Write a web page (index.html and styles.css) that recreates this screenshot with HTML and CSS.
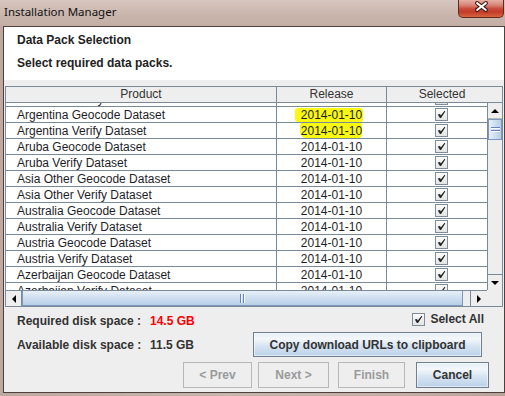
FILE: index.html
```html
<!DOCTYPE html>
<html>
<head>
<meta charset="utf-8">
<title>Installation Manager</title>
<link rel="stylesheet" href="styles.css">
</head>
<body>
<div class="window">
  <div class="titlebar">
    <span class="title">Installation Manager</span>
    <div class="close">
      <svg width="46" height="18" viewBox="0 0 46 18">
        <path d="M19.5 3 L28.5 10 M28.5 3 L19.5 10" stroke="#3b1712" stroke-width="4.2" stroke-linecap="round" fill="none"/>
        <path d="M19.5 3 L28.5 10 M28.5 3 L19.5 10" stroke="#ffffff" stroke-width="2" stroke-linecap="round" fill="none"/>
      </svg>
    </div>
  </div>
  <div class="frame">
    <div class="client">
      <div class="intro">
        <div class="intro-title">Data Pack Selection</div>
        <div class="intro-sub">Select required data packs.</div>
      </div>

      <div class="table">
        <div class="thead">
          <div class="th">Product</div>
          <div class="th">Release</div>
          <div class="th th-last">Selected</div>
        </div>
        <div class="tbody">
          <div class="viewport">
            <div class="rows">
              <div class="row"><div class="td name">Antarctica Verify Dataset</div><div class="td rel">2014-01-10</div><div class="td sel"><span class="cb"><svg width="11" height="11" viewBox="0 0 11 11"><path d="M1.8 5.6 L4 5 L4.8 6.6 L8.6 1.8 L9.3 2.4 L5 9 L3.9 9 Z" fill="#222"/></svg></span></div></div>
              <div class="row"><div class="td name">Argentina Geocode Dataset</div><div class="td rel"><span class="hl hl-a">2014-01-10</span></div><div class="td sel"><span class="cb"><svg width="11" height="11" viewBox="0 0 11 11"><path d="M1.8 5.6 L4 5 L4.8 6.6 L8.6 1.8 L9.3 2.4 L5 9 L3.9 9 Z" fill="#222"/></svg></span></div></div>
              <div class="row"><div class="td name">Argentina Verify Dataset</div><div class="td rel"><span class="hl hl-b">2014-01-10</span></div><div class="td sel"><span class="cb"><svg width="11" height="11" viewBox="0 0 11 11"><path d="M1.8 5.6 L4 5 L4.8 6.6 L8.6 1.8 L9.3 2.4 L5 9 L3.9 9 Z" fill="#222"/></svg></span></div></div>
              <div class="row"><div class="td name">Aruba Geocode Dataset</div><div class="td rel">2014-01-10</div><div class="td sel"><span class="cb"><svg width="11" height="11" viewBox="0 0 11 11"><path d="M1.8 5.6 L4 5 L4.8 6.6 L8.6 1.8 L9.3 2.4 L5 9 L3.9 9 Z" fill="#222"/></svg></span></div></div>
              <div class="row"><div class="td name">Aruba Verify Dataset</div><div class="td rel">2014-01-10</div><div class="td sel"><span class="cb"><svg width="11" height="11" viewBox="0 0 11 11"><path d="M1.8 5.6 L4 5 L4.8 6.6 L8.6 1.8 L9.3 2.4 L5 9 L3.9 9 Z" fill="#222"/></svg></span></div></div>
              <div class="row"><div class="td name">Asia Other Geocode Dataset</div><div class="td rel">2014-01-10</div><div class="td sel"><span class="cb"><svg width="11" height="11" viewBox="0 0 11 11"><path d="M1.8 5.6 L4 5 L4.8 6.6 L8.6 1.8 L9.3 2.4 L5 9 L3.9 9 Z" fill="#222"/></svg></span></div></div>
              <div class="row"><div class="td name">Asia Other Verify Dataset</div><div class="td rel">2014-01-10</div><div class="td sel"><span class="cb"><svg width="11" height="11" viewBox="0 0 11 11"><path d="M1.8 5.6 L4 5 L4.8 6.6 L8.6 1.8 L9.3 2.4 L5 9 L3.9 9 Z" fill="#222"/></svg></span></div></div>
              <div class="row"><div class="td name">Australia Geocode Dataset</div><div class="td rel">2014-01-10</div><div class="td sel"><span class="cb"><svg width="11" height="11" viewBox="0 0 11 11"><path d="M1.8 5.6 L4 5 L4.8 6.6 L8.6 1.8 L9.3 2.4 L5 9 L3.9 9 Z" fill="#222"/></svg></span></div></div>
              <div class="row"><div class="td name">Australia Verify Dataset</div><div class="td rel">2014-01-10</div><div class="td sel"><span class="cb"><svg width="11" height="11" viewBox="0 0 11 11"><path d="M1.8 5.6 L4 5 L4.8 6.6 L8.6 1.8 L9.3 2.4 L5 9 L3.9 9 Z" fill="#222"/></svg></span></div></div>
              <div class="row"><div class="td name">Austria Geocode Dataset</div><div class="td rel">2014-01-10</div><div class="td sel"><span class="cb"><svg width="11" height="11" viewBox="0 0 11 11"><path d="M1.8 5.6 L4 5 L4.8 6.6 L8.6 1.8 L9.3 2.4 L5 9 L3.9 9 Z" fill="#222"/></svg></span></div></div>
              <div class="row"><div class="td name">Austria Verify Dataset</div><div class="td rel">2014-01-10</div><div class="td sel"><span class="cb"><svg width="11" height="11" viewBox="0 0 11 11"><path d="M1.8 5.6 L4 5 L4.8 6.6 L8.6 1.8 L9.3 2.4 L5 9 L3.9 9 Z" fill="#222"/></svg></span></div></div>
              <div class="row"><div class="td name">Azerbaijan Geocode Dataset</div><div class="td rel">2014-01-10</div><div class="td sel"><span class="cb"><svg width="11" height="11" viewBox="0 0 11 11"><path d="M1.8 5.6 L4 5 L4.8 6.6 L8.6 1.8 L9.3 2.4 L5 9 L3.9 9 Z" fill="#222"/></svg></span></div></div>
              <div class="row"><div class="td name">Azerbaijan Verify Dataset</div><div class="td rel">2014-01-10</div><div class="td sel"><span class="cb"><svg width="11" height="11" viewBox="0 0 11 11"><path d="M1.8 5.6 L4 5 L4.8 6.6 L8.6 1.8 L9.3 2.4 L5 9 L3.9 9 Z" fill="#222"/></svg></span></div></div>
              <div class="row"><div class="td name">Bahamas Geocode Dataset</div><div class="td rel">2014-01-10</div><div class="td sel"><span class="cb"><svg width="11" height="11" viewBox="0 0 11 11"><path d="M1.8 5.6 L4 5 L4.8 6.6 L8.6 1.8 L9.3 2.4 L5 9 L3.9 9 Z" fill="#222"/></svg></span></div></div>
            </div>
          </div>
          <div class="vscroll">
            <div class="sbtn sbtn-v sbtn-up"><span class="arr arr-up"></span></div>
            <div class="vtrack">
              <div class="vthumb"><span class="grip-v"></span></div>
            </div>
            <div class="sbtn sbtn-v sbtn-down"><span class="arr arr-down"></span></div>
          </div>
        </div>
        <div class="hrow">
          <div class="hscroll">
            <div class="sbtn sbtn-h sbtn-left"><span class="arr arr-left"></span></div>
            <div class="htrack">
              <div class="hthumb"><span class="grip-h"></span></div>
            </div>
            <div class="sbtn sbtn-h sbtn-right"><span class="arr arr-right"></span></div>
          </div>
          <div class="corner"></div>
        </div>
      </div>

      <div class="summary">
        <div class="stats">
          <span>Required disk space :</span><span class="req">14.5 GB</span>
          <span>Available disk space :</span><span>11.5 GB</span>
        </div>
        <div class="side">
          <label class="selectall"><span class="cb"><svg width="11" height="11" viewBox="0 0 11 11"><path d="M1.8 5.6 L4 5 L4.8 6.6 L8.6 1.8 L9.3 2.4 L5 9 L3.9 9 Z" fill="#222"/></svg></span><span>Select All</span></label>
          <button class="btn btn-copy">Copy download URLs to clipboard</button>
        </div>
      </div>

      <div class="actions">
        <button class="btn btn-off btn-prev">&lt; Prev</button>
        <button class="btn btn-off btn-next">Next &gt;</button>
        <button class="btn btn-off btn-finish">Finish</button>
        <button class="btn btn-cancel">Cancel</button>
      </div>
    </div>
  </div>
</div>
</body>
</html>
```

FILE: styles.css
```css
* { box-sizing: border-box; }
html, body { margin: 0; padding: 0; }
body {
  width: 505px;
  height: 396px;
  overflow: hidden;
  font-family: "Liberation Sans", Arial, sans-serif;
  font-size: 12px;
  color: #333;
  background: #bca79e;
}
.window {
  width: 505px;
  height: 396px;
  display: flex;
  flex-direction: column;
  background: linear-gradient(90deg, #bea89f, #c8b4ac 45%, #c3ada4 80%, #b9a399);
}
.titlebar {
  height: 26px;
  display: flex;
  align-items: flex-start;
  background: linear-gradient(#d7c7c0, #c9b4ab 60%, #c4aea5);
}
.title {
  font-family: "Noto Sans", "Open Sans", sans-serif;
  font-size: 11.5px;
  line-height: 16px;
  color: #111;
  padding: 4px 0 0 4px;
}
.close {
  margin-left: auto;
  margin-right: 1px;
  width: 46px;
  height: 18px;
  border: 1px solid #5e2a22;
  border-top: 0;
  border-radius: 0 0 5px 5px;
  background: linear-gradient(#e6b0a4 0%, #d88576 30%, #c94a3a 52%, #c23a28 70%, #d9643f 100%);
  display: flex;
  align-items: flex-start;
  justify-content: center;
  overflow: hidden;
}
.close svg { display: block; margin-left: -1px; }
.frame {
  flex: 1;
  display: flex;
  padding: 0 0 3px 3px;
}
.client {
  flex: 1;
  border: 1px solid #4a403d;
  background: #eeeeee;
  display: flex;
  flex-direction: column;
}
.intro {
  height: 53px;
  background: #ffffff;
  padding: 5px 0 0 13px;
  font-weight: bold;
  color: #222;
  line-height: 16px;
}
.intro-sub { margin-top: 7px; }

.table {
  margin: 6px 1px 0 1px;
  border: 1px solid #7a8a99;
  background: #eeeeee;
}
.thead {
  display: grid;
  grid-template-columns: 271px 110px 1fr;
  height: 16px;
  border-bottom: 1px solid #7a8a99;
  background: #eeeeee;
}
.th {
  text-align: center;
  line-height: 15px;
  color: #333;
  border-right: 1px solid #7a8a99;
}
.th-last { border-right: 0; padding-right: 5px; }
.tbody { display: flex; height: 187px; }
.viewport {
  width: 481px;
  overflow: hidden;
  background: #ffffff;
}
.rows { margin-top: -12px; }
.row {
  display: grid;
  grid-template-columns: 271px 110px 110px;
  height: 16px;
  border-bottom: 1px solid #7a8a99;
}
.td {
  border-right: 1px solid #7a8a99;
  line-height: 16px;
  white-space: nowrap;
  overflow: hidden;
  color: #1e1e28;
}
.name { padding-left: 11px; }
.rel { text-align: center; }
.sel { display: flex; justify-content: center; align-items: center; }
.hl {
  display: inline-block;
  background: #f8f810;
  line-height: 14px;
  border-radius: 3px;
}
.hl-a { padding: 0 1px 0 6px; margin-left: -6px; margin-right: -1px; }
.hl-b { padding: 1px 0 0 1px; margin-left: -1px; border-radius: 2px 2px 4px 6px; }
.cb {
  width: 13px;
  height: 13px;
  border: 1px solid #7f8c99;
  background: linear-gradient(#fbfbfb, #e4e4e4);
  display: inline-flex;
  align-items: center;
  justify-content: center;
  flex: none;
}
.cb svg { display: block; }

.vscroll {
  width: 15px;
  display: flex;
  flex-direction: column;
  background: #eeeeee;
  border-left: 1px solid #7a8a99;
}
.sbtn {
  background: #eeeeee;
  display: flex;
  align-items: center;
  justify-content: center;
  flex: none;
}
.sbtn-v { height: 16px; }
.sbtn-up { border-bottom: 1px solid #b8b8b8; }
.sbtn-down { border-top: 1px solid #7a8a99; }
.vtrack { flex: 1; padding-top: 0; }
.vthumb {
  height: 21px;
  border: 1px solid #7b97bd;
  background: linear-gradient(90deg, #e8f0f8, #c9dbef 60%, #b8cfe5);
  display: flex;
  align-items: center;
  justify-content: center;
}
.grip-v {
  width: 9px;
  height: 6px;
  background: repeating-linear-gradient(#6382bf 0 1px, #ffffff 1px 2px, transparent 2px 3px);
}
.arr { width: 0; height: 0; display: block; }
.arr-up { border-left: 4px solid transparent; border-right: 4px solid transparent; border-bottom: 4px solid #000; }
.arr-down { border-left: 4px solid transparent; border-right: 4px solid transparent; border-top: 4px solid #000; }
.arr-left { border-top: 4px solid transparent; border-bottom: 4px solid transparent; border-right: 4px solid #000; }
.arr-right { border-top: 4px solid transparent; border-bottom: 4px solid transparent; border-left: 4px solid #000; }

.hrow { display: flex; height: 16px; }
.hscroll {
  width: 481px;
  display: flex;
  border-top: 1px solid #7a8a99;
  background: #eeeeee;
}
.sbtn-h { width: 16px; }
.sbtn-left { border-right: 1px solid #7a8a99; }
.sbtn-right { width: 17px; border-left: 1px solid #7a8a99; }
.htrack { flex: 1; display: flex; }
.hthumb {
  width: 441px;
  border: 1px solid #7b97bd;
  border-top: 0;
  background: linear-gradient(#e8f0f8, #c9dbef 60%, #b8cfe5);
  display: flex;
  align-items: center;
  justify-content: center;
}
.grip-h {
  width: 6px;
  height: 9px;
  background: repeating-linear-gradient(90deg, #6382bf 0 1px, #ffffff 1px 2px, transparent 2px 3px);
}
.corner { flex: 1; background: #eeeeee; border-top: 1px solid #eeeeee; }

.summary {
  display: flex;
  justify-content: space-between;
  padding: 1px 22px 0 13px;
}
.stats {
  display: grid;
  grid-template-columns: 133px auto;
  margin-top: 2px;
  line-height: 22px;
  font-weight: bold;
  color: #333;
}
.req { color: #ff0000; }
.side { display: flex; flex-direction: column; align-items: flex-end; }
.selectall {
  height: 22px;
  display: flex;
  align-items: center;
  gap: 5px;
  font-weight: bold;
  color: #333;
  margin-bottom: 2px;
  margin-right: -2px;
}
.btn {
  font-family: "Liberation Sans", Arial, sans-serif;
  font-size: 12px;
  font-weight: bold;
  color: #333;
  padding: 0;
  margin: 0;
  border: 1px solid #6f7f90;
  border-radius: 0;
  background: linear-gradient(#e4edf7, #f3f7fb 25%, #d3e2f1 60%, #bcd2e8);
  box-shadow: inset 0 0 0 1px rgba(255,255,255,0.5);
}
.btn-copy { width: 229px; height: 25px; }
.actions {
  display: flex;
  justify-content: flex-end;
  padding-right: 15px;
  margin-top: 5px;
}
.actions .btn { height: 26px; }
.btn-off {
  color: #9a9a9a;
  background: #eeeeee;
  border-color: #b8b8b8;
  box-shadow: none;
}
.btn-prev { width: 69px; }
.btn-next { width: 71px; margin-left: 6px; }
.btn-finish { width: 67px; margin-left: 9px; }
.btn-cancel { width: 73px; margin-left: 11px; }
```
